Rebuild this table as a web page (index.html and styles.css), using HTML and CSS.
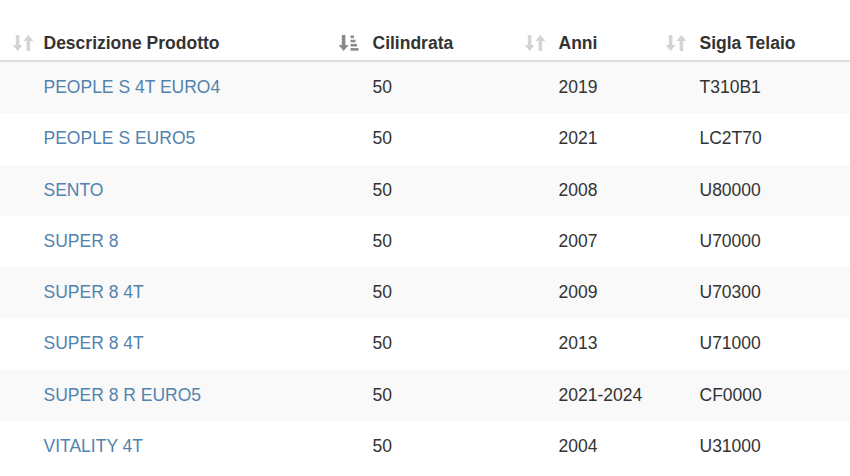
FILE: index.html
```html
<!DOCTYPE html>
<html lang="it">
<head>
<meta charset="utf-8">
<title>Prodotti</title>
<link rel="stylesheet" href="styles.css">
</head>
<body>
<div class="wrap">
<table class="grid">
  <colgroup>
    <col class="c0"><col class="c1"><col class="c2"><col class="c3"><col class="c4">
  </colgroup>
  <thead>
    <tr>
      <th><div class="hd"><span></span><svg class="sort" viewBox="0 0 20 16"><path d="M2.8 0h3.6v10h3.2l-5 6-5-6h3.2z M13.6 16h3.6V6h3.2l-5-6-5 6h3.2z"/></svg></div></th>
      <th><div class="hd"><span>Descrizione Prodotto</span><svg class="sort active" viewBox="0 0 20 16"><path d="M2.8 0h3.6v10h3.2l-5 6-5-6h3.2z"/><rect x="11.5" y="0.5" width="3.5" height="2.6"/><rect x="11.5" y="4.7" width="5" height="2.6"/><rect x="11.5" y="8.9" width="6.5" height="2.6"/><rect x="11.5" y="13.1" width="8" height="2.6"/></svg></div></th>
      <th><div class="hd"><span>Cilindrata</span><svg class="sort" viewBox="0 0 20 16"><path d="M2.8 0h3.6v10h3.2l-5 6-5-6h3.2z M13.6 16h3.6V6h3.2l-5-6-5 6h3.2z"/></svg></div></th>
      <th><div class="hd"><span>Anni</span><svg class="sort" viewBox="0 0 20 16"><path d="M2.8 0h3.6v10h3.2l-5 6-5-6h3.2z M13.6 16h3.6V6h3.2l-5-6-5 6h3.2z"/></svg></div></th>
      <th><div class="hd"><span>Sigla Telaio</span></div></th>
    </tr>
  </thead>
  <tbody>
    <tr><td></td><td><a href="#">PEOPLE S 4T EURO4</a></td><td>50</td><td>2019</td><td>T310B1</td></tr>
    <tr><td></td><td><a href="#">PEOPLE S EURO5</a></td><td>50</td><td>2021</td><td>LC2T70</td></tr>
    <tr><td></td><td><a href="#">SENTO</a></td><td>50</td><td>2008</td><td>U80000</td></tr>
    <tr><td></td><td><a href="#">SUPER 8</a></td><td>50</td><td>2007</td><td>U70000</td></tr>
    <tr><td></td><td><a href="#">SUPER 8 4T</a></td><td>50</td><td>2009</td><td>U70300</td></tr>
    <tr><td></td><td><a href="#">SUPER 8 4T</a></td><td>50</td><td>2013</td><td>U71000</td></tr>
    <tr><td></td><td><a href="#">SUPER 8 R EURO5</a></td><td>50</td><td>2021-2024</td><td>CF0000</td></tr>
    <tr><td></td><td><a href="#">VITALITY 4T</a></td><td>50</td><td>2004</td><td>U31000</td></tr>
  </tbody>
</table>
</div>
</body>
</html>
```
FILE: styles.css
```css
html, body {
  margin: 0;
  padding: 0;
  background: #fff;
}
body {
  font-family: "Liberation Sans", Arial, sans-serif;
  font-size: 17.5px;
  line-height: 25px;
  color: #333;
  overflow: hidden;
}
.wrap {
  padding-top: 18px;
}
.grid {
  width: 850px;
  table-layout: fixed;
  border-collapse: collapse;
  border-spacing: 0;
}
.c0 { width: 31px; }
.c1 { width: 329px; }
.c2 { width: 186px; }
.c3 { width: 141px; }
.c4 { width: 163px; }
.grid th {
  text-align: left;
  font-weight: bold;
  padding: 12.5px 1.5px 4.5px 12.5px;
  border-bottom: 2.5px solid #ddd;
  vertical-align: bottom;
}
.hd {
  display: flex;
  align-items: center;
  justify-content: space-between;
  height: 25px;
  white-space: nowrap;
}
.sort {
  display: block;
  width: 20px;
  height: 16px;
  fill: #d4d4d4;
  flex: none;
}
.sort.active {
  fill: #8a8a8a;
}
.grid td {
  padding: 13.125px 12.5px;
  vertical-align: top;
  white-space: nowrap;
}
.grid tbody tr:nth-child(odd) {
  background: #f9f9f9;
}
.grid a {
  color: #5283ae;
  text-decoration: none;
}
```
